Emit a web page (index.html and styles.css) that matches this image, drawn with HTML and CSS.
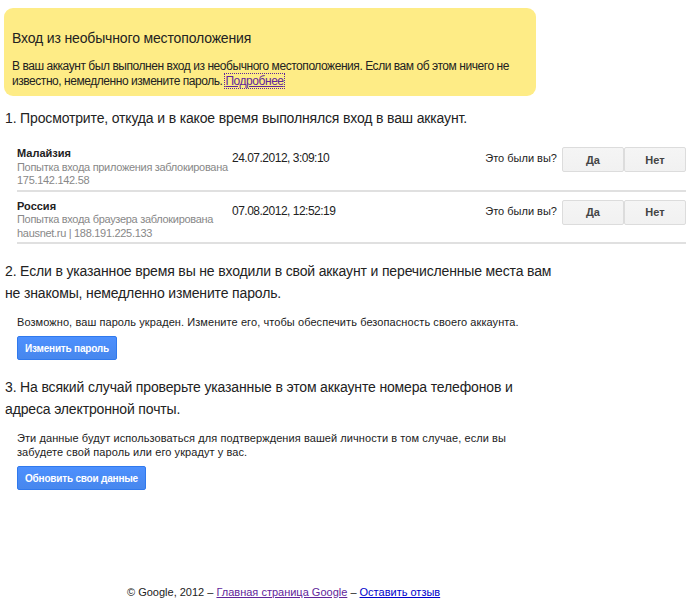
FILE: index.html
```html
<!DOCTYPE html>
<html lang="ru">
<head>
  <meta charset="UTF-8">
  <title>Вход из необычного местоположения</title>
  <link rel="stylesheet" href="styles.css">
</head>
<body>
  <div class="page">
    <div class="alert">
      <h2 class="alert-title">Вход из необычного местоположения</h2>
      <p class="alert-text">В ваш аккаунт был выполнен вход из необычного местоположения. Если вам об этом ничего не известно, немедленно измените пароль. <a href="#" class="more-link">Подробнее</a></p>
    </div>

    <h3 class="step step-first">1. Просмотрите, откуда и в какое время выполнялся вход в ваш аккаунт.</h3>
    <div class="events">
      <div class="event">
        <div class="event-place">
          <div class="place-name">Малайзия</div>
          <div class="place-info">Попытка входа приложения заблокирована</div>
          <div class="place-info">175.142.142.58</div>
        </div>
        <div class="event-date">24.07.2012, 3:09:10</div>
        <div class="event-ask">Это были вы?</div>
        <div class="event-buttons">
          <button type="button" class="gray-btn">Да</button>
          <button type="button" class="gray-btn">Нет</button>
        </div>
      </div>
      <div class="event">
        <div class="event-place">
          <div class="place-name">Россия</div>
          <div class="place-info">Попытка входа браузера заблокирована</div>
          <div class="place-info">hausnet.ru | 188.191.225.133</div>
        </div>
        <div class="event-date">07.08.2012, 12:52:19</div>
        <div class="event-ask">Это были вы?</div>
        <div class="event-buttons">
          <button type="button" class="gray-btn">Да</button>
          <button type="button" class="gray-btn">Нет</button>
        </div>
      </div>
    </div>

    <h3 class="step">2. Если в указанное время вы не входили в свой аккаунт и перечисленные места вам не знакомы, немедленно измените пароль.</h3>
    <div class="step-body">
      <p>Возможно, ваш пароль украден. Измените его, чтобы обеспечить безопасность своего аккаунта.</p>
      <button type="button" class="blue-btn">Изменить пароль</button>
    </div>

    <h3 class="step">3. На всякий случай проверьте указанные в этом аккаунте номера телефонов и адреса электронной почты.</h3>
    <div class="step-body">
      <p>Эти данные будут использоваться для подтверждения вашей личности в том случае, если вы забудете свой пароль или его украдут у вас.</p>
      <button type="button" class="blue-btn">Обновить свои данные</button>
    </div>

    <div class="footer">
      © Google, 2012 – <a href="#" class="visited">Главная страница Google</a> – <a href="#">Оставить отзыв</a>
    </div>
  </div>
</body>
</html>
```

FILE: styles.css
```css
/* Global */
body {
    margin: 0;
    font-family: "Liberation Sans", Arial, sans-serif;
    color: #222;
    background: #fff;
}

.page {
    padding: 8px 14px 0 4px;
}

/* Yellow notice */
.alert {
    width: 516px;
    background-color: #feec86;
    border-radius: 9px;
    padding: 22px 8px 7px 8px;
}

.alert-title {
    margin: 0 0 12px 0;
    font-size: 14px;
    letter-spacing: -0.15px;
    font-weight: normal;
    line-height: 17px;
}

.alert-text {
    margin: 0;
    font-size: 12px;
    letter-spacing: -0.45px;
    line-height: 15px;
}

.more-link {
    color: #61259b;
    outline: 1px dotted #61259b;
}

/* Steps */
.step {
    margin: 16px 0 0 1px;
    font-size: 14px;
    letter-spacing: -0.15px;
    font-weight: normal;
    line-height: 22px;
    width: 556px;
}

.step-first {
    margin-top: 11px;
}

.step-body {
    padding-left: 13px;
    font-size: 11px;
    color: #222;
}

.step-body p {
    margin: 11px 0 7px 0;
    line-height: 14px;
    letter-spacing: 0.08px;
    width: 520px;
}

/* Login events */
.events {
    margin: 10px 0 0 13px;
    width: 669px;
}

.event {
    display: flex;
    align-items: flex-start;
    padding: 8px 0 2px 0;
    border-bottom: 2px solid #e0e0e0;
}

.event-place {
    width: 215px;
    font-size: 11px;
    line-height: 13.5px;
    white-space: nowrap;
}

.place-name {
    font-weight: bold;
    color: #222;
}

.place-info {
    color: #888;
    letter-spacing: -0.3px;
}

.event-date {
    padding-top: 4px;
    font-size: 12px;
    letter-spacing: -0.5px;
    flex: 1;
}

.event-ask {
    padding-top: 5px;
    font-size: 11px;
    margin-right: 5px;
}

.event-buttons {
    display: flex;
}

.gray-btn {
    width: 62px;
    height: 25px;
    border: 1px solid #dcdcdc;
    border-radius: 2px;
    background: linear-gradient(#f5f5f5, #f1f1f1);
    color: #444;
    font-family: inherit;
    font-size: 11px;
    font-weight: bold;
}

.blue-btn {
    height: 24px;
    padding: 0 7px;
    border: 1px solid #3079ed;
    border-radius: 2px;
    background: linear-gradient(#4d90fe, #4787ed);
    color: #fff;
    font-family: inherit;
    font-size: 10px;
    letter-spacing: -0.2px;
    font-weight: bold;
}

/* Footer */
.footer {
    margin: 96px 0 0 123px;
    font-size: 11px;
    color: #222;
}

.footer a {
    color: #0000cc;
}

.footer a.visited {
    color: #61259b;
}
```
